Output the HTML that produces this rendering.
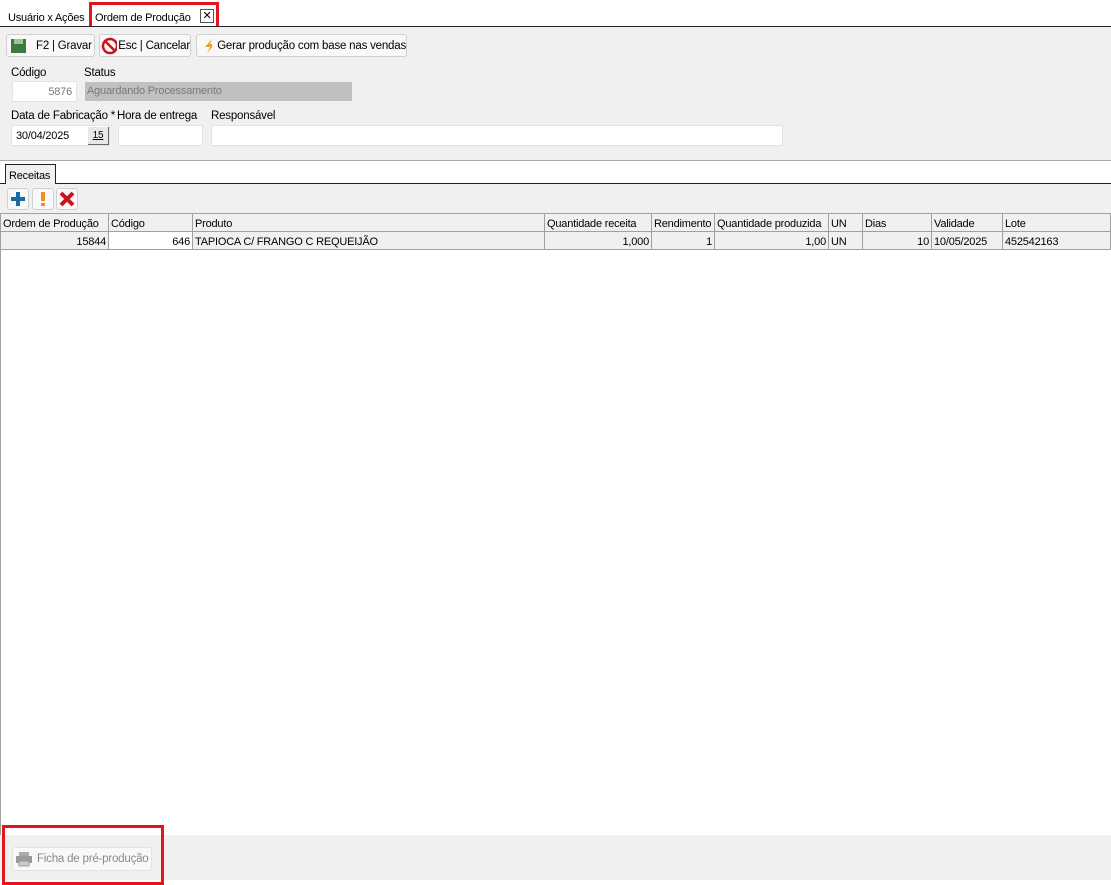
<!DOCTYPE html><html><head><style>
*{box-sizing:border-box;margin:0;padding:0}
body{width:1111px;height:885px;background:#fff;font-family:"Liberation Sans",sans-serif;font-size:11px;color:#000;position:relative;overflow:hidden;white-space:nowrap;letter-spacing:-0.2px}
.a{position:absolute}
.btn{position:absolute;height:23px;background:#f8f8f8;border:1px solid #d0d0d0;border-radius:3px;display:flex;align-items:center;font-size:11.5px}
.inp{position:absolute;background:#fff;border:1px solid #e3e3e3;height:21px;line-height:21px;padding:0 4px}
table{border-collapse:collapse;position:absolute;left:0;top:213px;table-layout:fixed;width:1110px}
td{border:1px solid #a0a0a0;height:18px;padding:2px 2px 0;white-space:nowrap;overflow:hidden;font-size:11px}
tr.h td{background:#f0f0f0}
tr.r td{background:#f0f0f0;text-align:right}
.r td.w{background:#fff}
</style></head><body>
<div class="a" style="left:8px;top:12px;font-size:11px">Usuário x Ações</div>
<div class="a" style="left:89px;top:2px;width:130px;height:27px;border:3px solid #e8141c"></div>
<div class="a" style="left:95px;top:12px;font-size:11px">Ordem de Produção</div>
<div class="a" style="left:200px;top:9px;width:14px;height:14px;border:1px solid #555;font-size:11px;line-height:12px;text-align:center">✕</div>
<div class="a" style="left:0;top:26px;width:1111px;height:1px;background:#222"></div>
<div class="a" style="left:0;top:27px;width:1111px;height:134px;background:#f0f0f0"></div>
<div class="btn" style="left:6px;top:34px;width:89px"><svg width="18" height="16" style="margin:0 8px 0 3px"><rect x="1" y="1" width="15" height="14" fill="#3c7a3c"/><rect x="4" y="1" width="9" height="5" fill="#9bc69b"/></svg>F2 | Gravar</div>
<div class="btn" style="left:99px;top:34px;width:92px"><svg width="18" height="18" style="margin:0 1px 0 1px"><circle cx="9" cy="9" r="7" fill="none" stroke="#c8141c" stroke-width="2.5"/><line x1="4" y1="4" x2="14" y2="14" stroke="#c8141c" stroke-width="2.5"/></svg>Esc | Cancelar</div>
<div class="btn" style="left:196px;top:34px;width:211px"><svg width="16" height="16" style="margin:0 5px 0 5px"><path d="M10 1 L3 9 H8 L5 15 L13 6 H8 Z" fill="#f0a030"/></svg>Gerar produção com base nas vendas</div>
<div class="a" style="left:11px;top:67px;font-size:11.5px">Código</div>
<div class="a" style="left:84px;top:67px;font-size:11.5px">Status</div>
<div class="inp" style="left:12px;top:81px;width:65px;text-align:right;color:#777">5876</div>
<div class="a" style="left:85px;top:82px;width:267px;height:19px;background:#c0c0c0;color:#7a7a7a;padding-left:2px;line-height:19px">Aguardando Processamento</div>
<div class="a" style="left:11px;top:110px;font-size:11.5px">Data de Fabricação *</div>
<div class="a" style="left:117px;top:110px;font-size:11.5px">Hora de entrega</div>
<div class="a" style="left:211px;top:110px;font-size:11.5px">Responsável</div>
<div class="inp" style="left:11px;top:125px;width:99px">30/04/2025</div>
<div class="a" style="left:88px;top:127px;width:21px;height:18px;background:#e8e8e8;border-right:1px solid #666;border-bottom:1px solid #666;font-size:10px;text-align:center;line-height:17px;text-decoration:underline">15</div>
<div class="inp" style="left:118px;top:125px;width:85px"></div>
<div class="inp" style="left:211px;top:125px;width:572px"></div>
<div class="a" style="left:0;top:160px;width:1111px;height:1px;background:#a8a8a8"></div>
<div class="a" style="left:5px;top:164px;width:51px;height:20px;border:1px solid #222;border-bottom:none;background:#f0f0f0;padding:5px 0 0 3px">Receitas</div>
<div class="a" style="left:0;top:183px;width:5px;height:1px;background:#222"></div>
<div class="a" style="left:56px;top:183px;width:1056px;height:1px;background:#222"></div>
<div class="a" style="left:0;top:184px;width:1111px;height:29px;background:#f0f0f0"></div>
<div class="btn" style="left:7px;top:188px;width:22px;height:22px;justify-content:center"><svg width="16" height="16"><path d="M6 1h4v5h5v4h-5v5H6v-5H1V6h5z" fill="#1a6aa8"/></svg></div>
<div class="btn" style="left:32px;top:188px;width:22px;height:22px;justify-content:center"><svg width="8" height="16"><rect x="2" y="1" width="4" height="9" fill="#f09020"/><rect x="2" y="12" width="4" height="3" fill="#f09020"/></svg></div>
<div class="btn" style="left:56px;top:188px;width:22px;height:22px;justify-content:center"><svg width="16" height="16"><path d="M2 2L14 14M14 2L2 14" stroke="#c8141c" stroke-width="4"/></svg></div>
<table>
<colgroup><col style="width:108px"><col style="width:84px"><col style="width:352px"><col style="width:107px"><col style="width:63px"><col style="width:114px"><col style="width:34px"><col style="width:69px"><col style="width:71px"><col style="width:108px"></colgroup>
<tr class="h"><td>Ordem de Produção</td><td>Código</td><td>Produto</td><td>Quantidade receita</td><td>Rendimento</td><td>Quantidade produzida</td><td>UN</td><td>Dias</td><td>Validade</td><td>Lote</td></tr>
<tr class="r"><td>15844</td><td class="w">646</td><td style="text-align:left">TAPIOCA C/ FRANGO C REQUEIJÃO</td><td>1,000</td><td>1</td><td>1,00</td><td style="text-align:left">UN</td><td>10</td><td style="text-align:left">10/05/2025</td><td style="text-align:left">452542163</td></tr>
</table>
<div class="a" style="left:0;top:250px;width:1px;height:585px;background:#a0a0a0"></div>
<div class="a" style="left:0;top:835px;width:1111px;height:45px;background:#f0f0f0"></div>
<div class="a" style="left:2px;top:825px;width:162px;height:60px;border:3px solid #e8141c"></div>
<div class="btn" style="left:12px;top:847px;width:140px;height:24px;color:#8a8a8a;border-color:#e3e3e3"><svg width="18" height="16" style="margin:0 4px 0 2px"><rect x="4" y="1" width="10" height="4" fill="#aaa"/><rect x="1" y="5" width="16" height="7" fill="#999"/><rect x="4" y="10" width="10" height="5" fill="#ccc" stroke="#999"/></svg>Ficha de pré-produção</div>
</body></html>
